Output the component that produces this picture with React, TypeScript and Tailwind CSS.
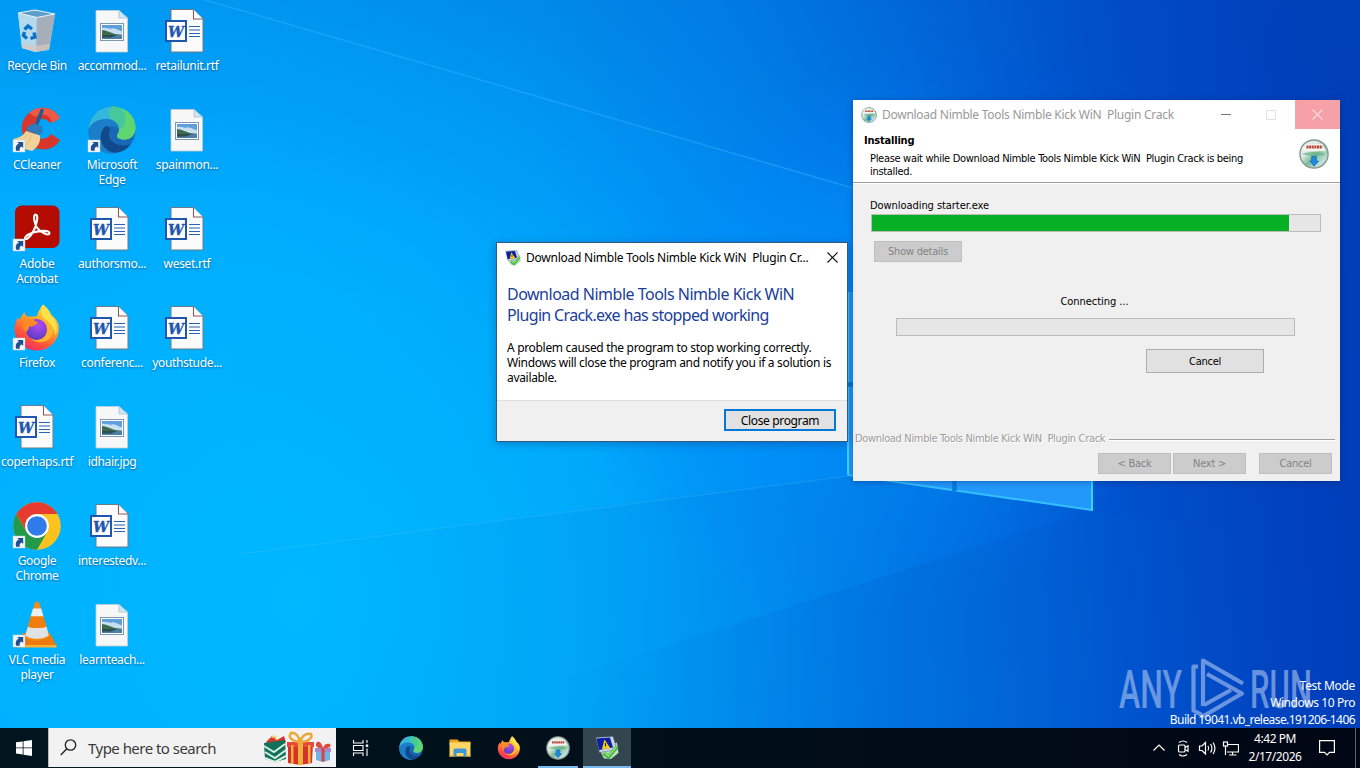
import type { ReactNode } from "react";

const UI = "font-['Noto_Sans','Open_Sans',sans-serif]";
const TAHOMA = "font-['DejaVu_Sans_Condensed','DejaVu_Sans',sans-serif]";

/* ---------- wallpaper ---------- */

function Wallpaper() {
    return (
        <svg className="absolute inset-0" width="1360" height="768" viewBox="0 0 1360 768">
            <defs>
                <linearGradient id="base" gradientUnits="userSpaceOnUse" x1="0" y1="400" x2="1360" y2="290">
                    <stop offset="0" stopColor="#00aeff" />
                    <stop offset="0.2" stopColor="#00aafd" />
                    <stop offset="0.4" stopColor="#009cf5" />
                    <stop offset="0.55" stopColor="#0088ee" />
                    <stop offset="0.68" stopColor="#0070e2" />
                    <stop offset="0.82" stopColor="#0050cc" />
                    <stop offset="0.95" stopColor="#0040bc" />
                    <stop offset="1" stopColor="#003eb8" />
                </linearGradient>
                <linearGradient id="topShade" x1="0" y1="0" x2="0" y2="1">
                    <stop offset="0" stopColor="#0048b8" stopOpacity="0.2" />
                    <stop offset="0.3" stopColor="#0048b8" stopOpacity="0" />
                </linearGradient>
                <radialGradient id="glow" gradientUnits="userSpaceOnUse" cx="870" cy="350" r="280">
                    <stop offset="0" stopColor="#0090ff" stopOpacity="0.85" />
                    <stop offset="0.5" stopColor="#0090ff" stopOpacity="0.4" />
                    <stop offset="1" stopColor="#0080ff" stopOpacity="0" />
                </radialGradient>
                <radialGradient id="floor" gradientUnits="userSpaceOnUse" cx="300" cy="600" r="620">
                    <stop offset="0" stopColor="#00baff" stopOpacity="0.9" />
                    <stop offset="0.5" stopColor="#00b4ff" stopOpacity="0.6" />
                    <stop offset="1" stopColor="#00a0ff" stopOpacity="0" />
                </radialGradient>
                <linearGradient id="under" gradientUnits="userSpaceOnUse" x1="300" y1="0" x2="1250" y2="0">
                    <stop offset="0" stopColor="#0084dc" stopOpacity="0" />
                    <stop offset="0.65" stopColor="#0074dc" stopOpacity="0.3" />
                    <stop offset="0.84" stopColor="#0060d4" stopOpacity="0.22" />
                    <stop offset="1" stopColor="#0050c8" stopOpacity="0" />
                </linearGradient>
                <linearGradient id="deep" gradientUnits="userSpaceOnUse" x1="560" y1="0" x2="1250" y2="0">
                    <stop offset="0" stopColor="#005cc8" stopOpacity="0" />
                    <stop offset="0.5" stopColor="#005cc8" stopOpacity="0.22" />
                    <stop offset="0.77" stopColor="#0054c8" stopOpacity="0.15" />
                    <stop offset="1" stopColor="#0050c8" stopOpacity="0" />
                </linearGradient>
            </defs>
            <rect width="1360" height="768" fill="url(#base)" />
            <rect width="1360" height="768" fill="url(#topShade)" />
            <rect width="1360" height="768" fill="url(#floor)" />
            <rect width="1360" height="768" fill="url(#glow)" />
            <path d="M205 0 853 188V300L0 60V0Z" fill="#00a0ff" opacity="0.12" />
            <path d="M205 0 853 188" stroke="#4cbcff" strokeWidth="1.500" opacity="0.35" />
            <path d="M848 475 240 553V728H1360V550L1092 510Z" fill="url(#under)" />
            <path d="M1092 510 560 680V728H1360V550Z" fill="url(#deep)" />
            <path d="M848 476 240 554" stroke="#50c4ff" strokeWidth="1.500" opacity="0.22" />
            <path d="M848 292H1092V510L848 475Z" fill="#2398fb" />
            <path d="M848 475 1092 510" stroke="#35bfff" strokeWidth="2" />
            <path d="M848 292V475M1092 292V511" stroke="#35d3ff" strokeWidth="2" />
            <path d="M954.500 292V491M847 384.500H1092" stroke="#0a78dc" strokeWidth="4.500" />
        </svg>
    );
}

function Watermark() {
    return (
        <svg
            className="absolute left-[1116px] top-[652px]"
            width="200"
            height="70"
            viewBox="1116 652 200 70"
            opacity="0.5"
        >
            <g fill="#d2defa" fontFamily="Roboto, sans-serif" fontSize="53.500" fontWeight="500">
                <text x="1119" y="708" textLength="63" lengthAdjust="spacingAndGlyphs">ANY</text>
                <text x="1250" y="708" textLength="62" lengthAdjust="spacingAndGlyphs">RUN</text>
            </g>
            <g fill="none" stroke="#d2defa" strokeWidth="4.200" strokeLinejoin="round">
                <path d="M1198 666.500h-4.500V710.500L1202 715" />
                <path d="M1203 706V660.500L1243 683.500" />
                <path d="M1207 674 1242 693.500 1201 717.500" />
                <path d="M1204 705 1231 690" />
            </g>
        </svg>
    );
}

/* ---------- icons ---------- */

function ShortcutArrow() {
    return (
        <g>
            <rect x="0" y="34" width="12" height="12" fill="#f4f8fc" stroke="#b8ccd8" strokeWidth="0.500" />
            <path d="M3.200 44.800C2 41 3.500 38.300 6 37.800L4.200 36H10.200V42L8.600 40.400C6.800 41 6.300 42.800 6.800 44.800Z" fill="#1d4f91" />
        </g>
    );
}

function Svg48({ children }: { children: ReactNode }) {
    return (
        <svg width="48" height="48" viewBox="0 0 48 48" className="overflow-visible">
            {children}
        </svg>
    );
}

function RecycleBin() {
    return (
        <Svg48>
            <path d="M5 6 22 3 42 7 36 43 22 45 9 41Z" fill="#c4d3df" />
            <path d="M5 6 24 10 23 45 9 41Z" fill="#b4d8ec" />
            <path d="M24 10 42 7 36 42 23 45Z" fill="#a4afb9" />
            <path d="M5 6 22 3 42 7 24 10.500Z" fill="#5c9fcb" stroke="#e4f1f8" strokeWidth="1.200" />
            <path d="M8.500 37 23 39 37 36.500 36 42 23 45 9 41Z" fill="#d8c9bd" opacity="0.7" />
            <g fill="none" stroke="#0874c9" strokeWidth="3.400">
                <path d="M11.500 22.500 15 19 19 22" />
                <path d="M21 25.500 22 30 17.500 31.500" />
                <path d="M14 31.500 10.500 28.500 11.500 25" />
            </g>
        </Svg48>
    );
}

function PictureFile() {
    return (
        <Svg48>
            <path d="M8 3.500H31L39.500 11V45H8Z" fill="#f7f7f7" stroke="#c4cdd2" strokeWidth="0.800" />
            <path d="M31 3.500V11H39.500Z" fill="#cfe5f3" stroke="#a6c3d4" strokeWidth="0.800" />
            <rect x="12.500" y="16.500" width="23" height="17" fill="#fff" stroke="#7c98b0" />
            <rect x="14" y="18" width="20" height="14" fill="#5f9fdc" />
            <path d="M14 21c5-1 7 1.500 10 .5s6 2 10 3V28H14z" fill="#c8dff0" />
            <path d="M14 23c4 0 8 2.500 13 4l7 .7v.8H14z" fill="#3e6a50" />
            <path d="M14 28h20v4H14z" fill="#4b7fa8" />
            <path d="M14 28h15l-6 2.500h-9z" fill="#2b4c50" />
        </Svg48>
    );
}

function WordFile() {
    return (
        <Svg48>
            <path d="M8 2.500H30.500L40 12V45H8Z" fill="#fbfbfb" stroke="#6a7b88" />
            <path d="M30.500 2.500V12H40" fill="#fff" stroke="#8a5a5a" strokeWidth="1.100" />
            <path d="M26 19.500H37M26 23H37M26 26.500H37M26 29.500H37" stroke="#2b62b4" strokeWidth="1.200" />
            <rect x="3" y="14" width="20" height="20" fill="#fff" stroke="#1f56ae" strokeWidth="2" />
            <text
                x="13"
                y="29.500"
                textAnchor="middle"
                textLength="16"
                lengthAdjust="spacingAndGlyphs"
                fontFamily="DejaVu Serif, serif"
                fontSize="15"
                fontWeight="700"
                fontStyle="italic"
                fill="#1f56ae"
                stroke="#1f56ae"
                strokeWidth="0.400"
            >
                W
            </text>
        </Svg48>
    );
}

function CCleaner() {
    return (
        <Svg48>
            <path
                d="M47 12C41 1 26-2 16 7c-6 5-8 12-7 18 2 14 14 20 25 18 6-1 10-4 13-9l-9-6c-4 6-12 6-15 1-4-5-3-12 2-15 5-2 9-1 12 3z"
                fill="#d8352b"
            />
            <path d="M47 12C41 1 26-2 16 7l6 4c8-5 15-2 17 6z" fill="#ee5a45" />
            <path d="M29 4.500 23 20" stroke="#225c92" strokeWidth="3.500" strokeLinecap="round" />
            <path d="M14 22C17 17 24 17 29 20L30 26 27 29 14 25Z" fill="#2f7cbc" />
            <path d="M13 25 27 29.500C28 36 25 41 19 45 11 43 3 39 0 33 6 32 10 30 13 25Z" fill="#f3d29a" />
            <path d="M14 28c-2 5-5 8-9 9M18 29c-1 6-4 10-8 12" fill="none" stroke="#e0b878" strokeWidth="0.900" />
            <ShortcutArrow />
        </Svg48>
    );
}

function EdgeMark() {
    return (
        <g>
            <circle cx="24" cy="24" r="23.500" fill="#1968b8" />
            <path d="M.6 24C1 10 12 .5 24 .5 38 .5 47.500 10 47.500 22c0 7-5 11.500-11 11.500-4 0-7.500-1.500-7.500-3.500 0-1.500 2-2.500 2-6 0-5-5-9-11.500-9C9 15 2 21 .6 24Z" fill="#34b7dc" />
            <path d="M24 .5C38 .5 47.500 10 47.500 22c0 7-5 11.500-11 11.500-4 0-7.500-1.500-7.500-3.500 0-1.500 2-2.500 2-6 0-4-3-7-7-8.500C20 10 20 4 24 .5Z" fill="#46c99a" />
            <path d="M34 2.800C42 6 47.500 13 47.500 22c0 7-5 11.500-11 11.500-4 0-7.500-1.500-7.500-3.500 0-1.500 2-2.500 2-6 8-3 9-13 3-21.200Z" fill="#5fd672" />
            <path d="M.5 25C1 18 9 12.500 19 13c8 .500 12 5 12 10.500-2-2.500-5-3.500-8-3.500-8 2-12 12-7 20 3 4.500 7 6.500 11 7.500C12 48.500 0 38 .5 25Z" fill="#1a7fc8" />
            <path d="M17 20.500C11 26 11 37 18 43c8 6.500 20 3 25-5.500-5 3-13 3-18-1.500-5-4.500-5-9-2.500-13.500C20.500 20.500 19 20 17 20.500Z" fill="#114a8b" />
        </g>
    );
}

function FirefoxMark() {
    return (
        <g>
            <defs>
                <linearGradient id="fox" x1="0.8" y1="0" x2="0.25" y2="1">
                    <stop offset="0" stopColor="#ffe43f" />
                    <stop offset="0.4" stopColor="#ffa52a" />
                    <stop offset="0.75" stopColor="#ff503c" />
                    <stop offset="1" stopColor="#e9286c" />
                </linearGradient>
                <radialGradient id="globe" cx="0.6" cy="0.3" r="0.8">
                    <stop offset="0" stopColor="#b14af0" />
                    <stop offset="1" stopColor="#4f3ac0" />
                </radialGradient>
            </defs>
            <path
                d="M30 .5c4 3 7 7 8.500 11 3 1.500 5.500 5 7 9 2.500 13-7 26-21.500 26C11 46.500 1.500 36.500 1.500 25c0-5 1.500-9 4-12L6 16.500C8 13 9.500 11 11.500 8c.5 3 2 4.500 4 4.500h8C25 8.500 27 4 30 .5Z"
                fill="url(#fox)"
            />
            <circle cx="23.500" cy="25.500" r="10.500" fill="url(#globe)" />
            <path d="M10 16c6-2 11-1 15 3-3 3-6 3.500-9 3.500 0 4-3 6-4.500 4.500C9.500 24 9 19 10 16Z" fill="#ff8a22" />
            <path d="M20 13.500c7-2 14 2 14.500 11C34.500 35 24 39 17 34c9 9 24 3 23-9-1-8-9-14-20-11.500Z" fill="#ffb52e" />
            <path d="M30 .5c4 3 7 7 8.500 11 5 5 7 13 4 20-1-8-5-12-10-16-5-3.500-6-9-2.500-15Z" fill="#ffe04a" />
        </g>
    );
}

function Acrobat() {
    return (
        <Svg48>
            <rect x="2" y="0.500" width="44.500" height="42.500" rx="7" fill="#b30b00" />
            <path
                d="M22.500 9.500c2.800 0 2 6-.2 12.500C20 28 15.500 34 13 34c-2.500 0-.5-4 7-6.500 7-2.200 16.500-2.300 16.500.7 0 3-8 .5-12.500-5.500-3-4.500-4-13.200-1.500-13.200Z"
                fill="none"
                stroke="#fff"
                strokeWidth="2.100"
            />
            <ShortcutArrow />
        </Svg48>
    );
}

function Chrome() {
    return (
        <Svg48>
            <circle cx="24" cy="24" r="23.800" fill="#fcc31e" />
            <path d="M3.400 12.100A23.800 23.800 0 0 0 24 47.800L34.300 30 24 24 13.700 30Z" fill="#239a4a" />
            <path d="M3.400 12.100A23.800 23.800 0 0 1 44.600 12.100H24L14 18V30Z" fill="#e63b2e" />
            <circle cx="24" cy="24" r="11.900" fill="#fff" />
            <circle cx="24" cy="24" r="9.800" fill="#2f7bea" />
            <ShortcutArrow />
        </Svg48>
    );
}

function Vlc() {
    return (
        <Svg48>
            <path d="M10 32H37L43.500 45H4Z" fill="#ee7a0b" />
            <path d="M4 44H43.500V46.500H4Z" fill="#ffae30" />
            <path d="M22 1.500c2-1.500 3.500-1 4.500 1L36 35c-3 6-22 6-24 0Z" fill="#f58a14" />
            <path d="M20 7.500h8.200l2.300 8H17.700c.6-2.500 1.500-5 2.300-8Z" fill="#eceff1" />
            <path d="M15 25.500c5 2 13 2 18.500 0L35.800 34c-4 5-20 5-23.500 0Z" fill="#dfe3e6" />
            <path d="M17.700 15.500h12.800l3 10c-5 2-13.500 2-18.500 0Z" fill="#f07e0c" />
            <ShortcutArrow />
        </Svg48>
    );
}

function InstallerDisc({ size }: { size: number }) {
    return (
        <svg width={size} height={size} viewBox="0 0 32 32">
            <defs>
                <linearGradient id="disc" x1="0" y1="0" x2="1" y2="1">
                    <stop offset="0" stopColor="#e9f5f2" />
                    <stop offset="0.35" stopColor="#d9e9e2" />
                    <stop offset="0.55" stopColor="#7dbd98" />
                    <stop offset="0.8" stopColor="#c3e2da" />
                    <stop offset="1" stopColor="#8daca8" />
                </linearGradient>
            </defs>
            <circle cx="16" cy="16" r="15" fill="url(#disc)" stroke="#87958f" strokeWidth="1.500" />
            <path d="M7 5h18l4 8H3Z" fill="#f2f3ec" />
            <path d="M8 8.500H25" stroke="#b8453c" strokeWidth="3" strokeDasharray="2.200 0.600" />
            <path d="M3 16c7-3 18-3 26 1-5 0-8 1-13 1S7 17 3 16Z" fill="#5ea984" opacity="0.6" />
            <path d="M13.500 18.500h5v5H21L16 29 11.500 23.500h2Z" fill="#1d8ade" stroke="#0e5ca8" strokeWidth="0.600" />
        </svg>
    );
}

function ErrorReport({ size }: { size: number }) {
    return (
        <svg width={size} height={size} viewBox="0 0 24 24">
            <path d="M9 11 22 6.500 23.500 17 16 23 9 22.500 6 17Z" fill="#bcdcbc" />
            <path d="M1 1.500 18 .5 22 13.500 4.500 16.500Z" fill="#ccd6e4" stroke="#5c6880" strokeWidth="0.500" />
            <path d="M1.500 2.500 15 1.500 18 11.500 4 14Z" fill="#0b1fa3" />
            <path d="M9.500 3.500 15.500 12.500 7 13Z" fill="#ffd417" />
            <path d="M10.500 7v3.500" stroke="#222" strokeWidth="1.200" />
            <path d="M8.500 17 13.500 21 22 10.500" fill="none" stroke="#43b53c" strokeWidth="3.600" />
            <path d="M9 16.500 13.500 20.200 21.500 10.500" fill="none" stroke="#9de88c" strokeWidth="1.200" />
        </svg>
    );
}

function Explorer() {
    return (
        <svg width="24" height="24" viewBox="0 0 24 24">
            <path d="M1.500 3.500h8l2 2h11v3h-21Z" fill="#e8a61c" />
            <path d="M1.500 6.500h21v14h-21Z" fill="#ffd766" />
            <path d="M5.500 20.500V14q0-1.500 1.500-1.500h10q1.500 0 1.500 1.500V20.500H15.500V17h-7v3.500Z" fill="#3c96d8" />
            <path d="M1.500 19h4v1.500h-4ZM18.500 19h4v1.500h-4Z" fill="#f0bb3a" />
        </svg>
    );
}

function Gifts() {
    return (
        <svg width="70" height="36" viewBox="0 0 70 36">
            <path d="M3 11 9 5l5 4 7-4 2 6-6 3H6Z" fill="#d8342c" />
            <path d="M1 12 22 9 23 28 12 31 2 28Z" fill="#12715a" />
            <path d="M1 15 11 21 22 13M2 21 12 27 23 19M2 27 12 31 23 25" fill="none" stroke="#d8efe4" strokeWidth="2" />
            <path d="M9 7c1-3 5-3 4 2" fill="none" stroke="#f3d36a" strokeWidth="1.500" />
            <path d="M25 12H50L49 32 37 34 25 32Z" fill="#d5332a" />
            <path d="M24 11H51V16H24Z" fill="#e8493b" />
            <path d="M35 11h5v23h-5ZM28 14h2.500v19H28ZM45 14h2.500v18H45Z" fill="#f2b13c" />
            <path d="M37 11C28 10 25 6 28 2c5-1 8 4 9 9 2-6 6-9 11-8 2 4-3 8-11 8Z" fill="none" stroke="#eca93a" strokeWidth="2.600" />
            <path d="M53 19H67V29L60 31 53 29Z" fill="#6fb2e6" />
            <path d="M52 17h16v4H52Z" fill="#a48bc9" />
            <path d="M58.500 17h3v13.500h-3Z" fill="#d8433a" />
            <path d="M60 17C55 18 51 15 54 11c3-1 5 2 6 6 1-4 4-5 7-4 2 3-2 5-7 4Z" fill="#dd4a40" />
        </svg>
    );
}

/* ---------- desktop ---------- */

type Shortcut = { icon: ReactNode; label: string[] };

const columns: Shortcut[][] = [
    [
        { icon: <RecycleBin />, label: ["Recycle Bin"] },
        { icon: <CCleaner />, label: ["CCleaner"] },
        { icon: <Acrobat />, label: ["Adobe", "Acrobat"] },
        {
            icon: (
                <Svg48>
                    <FirefoxMark />
                    <ShortcutArrow />
                </Svg48>
            ),
            label: ["Firefox"],
        },
        { icon: <WordFile />, label: ["coperhaps.rtf"] },
        { icon: <Chrome />, label: ["Google", "Chrome"] },
        { icon: <Vlc />, label: ["VLC media", "player"] },
    ],
    [
        { icon: <PictureFile />, label: ["accommod..."] },
        {
            icon: (
                <Svg48>
                    <EdgeMark />
                    <ShortcutArrow />
                </Svg48>
            ),
            label: ["Microsoft", "Edge"],
        },
        { icon: <WordFile />, label: ["authorsmo..."] },
        { icon: <WordFile />, label: ["conferenc..."] },
        { icon: <PictureFile />, label: ["idhair.jpg"] },
        { icon: <WordFile />, label: ["interestedv..."] },
        { icon: <PictureFile />, label: ["learnteach..."] },
    ],
    [
        { icon: <WordFile />, label: ["retailunit.rtf"] },
        { icon: <PictureFile />, label: ["spainmon..."] },
        { icon: <WordFile />, label: ["weset.rtf"] },
        { icon: <WordFile />, label: ["youthstude..."] },
    ],
];

function DesktopIcons() {
    return (
        <div className="relative -ml-[0.5px] flex h-full">
            {columns.map((column, i) => (
                <div key={i} className="flex w-[75px] flex-col">
                    {column.map((item) => (
                        <div key={item.label[0]} className="flex h-[99px] flex-col items-center pt-[7px]">
                            {item.icon}
                            <div className="mt-[3px] text-center text-[12px] leading-[15px] tracking-[-0.32px] whitespace-nowrap text-white [text-shadow:0_1px_2px_rgba(0,40,90,0.6)]">
                                {item.label.map((line) => (
                                    <div key={line}>{line}</div>
                                ))}
                            </div>
                        </div>
                    ))}
                </div>
            ))}
        </div>
    );
}

/* ---------- windows ---------- */

function CrashDialog() {
    return (
        <div className="absolute left-[496px] top-[242px] flex h-[200px] w-[352px] flex-col border border-[#33597c] bg-white text-black shadow-[0_2px_8px_rgba(0,30,90,0.3)]">
            <div className="flex h-[29px] items-center pl-2">
                <ErrorReport size={16} />
                <span className="ml-[5px] flex-1 text-[12px] tracking-[-0.24px] whitespace-pre">
                    Download Nimble Tools Nimble Kick WiN  Plugin Cr...
                </span>
                <svg width="11" height="11" viewBox="0 0 11 11" className="mr-[9px]">
                    <path d="M.5.5 10.500 10.500M10.500.5.5 10.500" stroke="#111" strokeWidth="1.100" />
                </svg>
            </div>
            <div className="flex-1 px-[10px] pt-[12px]">
                <h1 className="text-[16px] leading-[21px] whitespace-nowrap text-[#1a4099]">
                    <div className="tracking-[-0.5px]">Download Nimble Tools Nimble Kick WiN</div>
                    <div className="tracking-[-0.66px]">Plugin Crack.exe has stopped working</div>
                </h1>
                <p className="mt-[14px] text-[12px] leading-[15px] tracking-[-0.32px] whitespace-nowrap">
                    A problem caused the program to stop working correctly.
                    <br />
                    Windows will close the program and notify you if a solution is
                    <br />
                    available.
                </p>
            </div>
            <div className="flex h-[41px] items-start justify-end border-t border-[#dfdfdf] bg-[#f0f0f0] pt-2 pr-[11px]">
                <button className="h-[22px] w-[112px] border-2 border-[#0078d7] bg-[#e1e1e1] pt-px text-[12px] leading-[17px] tracking-[-0.35px]">
                    Close program
                </button>
            </div>
        </div>
    );
}

function DisabledButton({ className, children }: { className: string; children: ReactNode }) {
    return (
        <button
            disabled
            className={`h-[21px] border border-[#bfbfbf] bg-[#cccccc] pt-px text-[11px] leading-[18px] tracking-[-0.25px] text-[#838383] ${className}`}
        >
            {children}
        </button>
    );
}

function InstallerWindow() {
    return (
        <div
            className={`absolute left-[853px] top-[100px] flex h-[381px] w-[487px] flex-col bg-[#f0f0f0] text-[11px] text-black shadow-[0_1px_6px_rgba(0,20,70,0.35)] ${TAHOMA}`}
        >
            <div className="flex h-[29px] shrink-0 items-center bg-white pl-2">
                <InstallerDisc size={16} />
                <span className={`ml-[5px] flex-1 text-[12px] tracking-[-0.27px] whitespace-pre text-[#999999] ${UI}`}>
                    Download Nimble Tools Nimble Kick WiN  Plugin Crack
                </span>
                <div className="mr-[35px] h-px w-[10px] bg-[#777]" />
                <div className="mr-[19px] size-[10px] border border-[#e4e4e4]" />
                <div className="flex h-full w-[45px] items-center justify-center bg-[#f6a1a8]">
                    <svg width="11" height="11" viewBox="0 0 11 11">
                        <path d="M.5.5 10.500 10.500M10.500.5.5 10.500" stroke="#fbdcde" strokeWidth="1.100" />
                    </svg>
                </div>
            </div>

            <div className="flex h-[54px] shrink-0 justify-between border-b border-[#a0a0a0] bg-white">
                <div className="pt-[5px] pl-[11px]">
                    <div className="leading-[13px] font-bold tracking-[-0.2px]">Installing</div>
                    <div className="mt-[5px] pl-[6px] leading-[13px] tracking-[-0.31px] whitespace-pre">
                        Please wait while Download Nimble Tools Nimble Kick WiN  Plugin Crack is being
                        <br />
                        installed.
                    </div>
                </div>
                <div className="pt-[10px] pr-[11px]">
                    <InstallerDisc size={30} />
                </div>
            </div>

            <div className="flex flex-1 flex-col border-t border-white pt-[15px]">
                <div className="pl-[17px] leading-[14px] tracking-[-0.06px]">Downloading starter.exe</div>
                <div className="mt-px ml-[18px] h-[18px] w-[450px] border border-[#bcbcbc] bg-[#e6e6e6]">
                    <div className="h-full w-[417px] bg-[#06b025]" />
                </div>
                <DisabledButton className="mt-[9px] ml-[21px] w-[88px]">Show details</DisabledButton>
                <div className="mt-[33px] pr-[4px] text-center leading-[14px] tracking-[-0.05px]">Connecting ...</div>
                <div className="mt-[9px] ml-[43px] h-[18px] w-[399px] border border-[#bcbcbc] bg-[#e6e6e6]" />
                <button className="mt-[13px] ml-[293px] h-[24px] w-[118px] border border-[#adadad] bg-[#e1e1e1] leading-[21px] tracking-[-0.25px]">
                    Cancel
                </button>
            </div>

            <div className="flex h-[14px] shrink-0 items-center pr-[5px] pl-[2px] text-[#9c9c9c]">
                <span className="pt-[2px] tracking-[-0.33px] whitespace-pre [text-shadow:1px_1px_0_#fff]">
                    Download Nimble Tools Nimble Kick WiN  Plugin Crack
                </span>
                <div className="mt-[3px] ml-[4px] h-[2px] flex-1 border-t border-[#a0a0a0] bg-white" />
            </div>
            <div className="flex h-[36px] shrink-0 justify-end pt-[8px] pr-[8px]">
                <DisabledButton className="w-[73px]">&lt; Back</DisabledButton>
                <DisabledButton className="ml-[2px] w-[73px]">Next &gt;</DisabledButton>
                <DisabledButton className="ml-[13px] w-[73px]">Cancel</DisabledButton>
            </div>
        </div>
    );
}

/* ---------- taskbar ---------- */

function TaskButton({ children, state }: { children: ReactNode; state?: "open" | "active" }) {
    return (
        <div className={`relative flex w-[48px] items-center justify-center ${state === "active" ? "bg-[#33454f]" : ""}`}>
            {children}
            {state === "open" && <div className="absolute bottom-0 left-1 h-[2px] w-[40px] bg-[#76b9ed]" />}
            {state === "active" && <div className="absolute bottom-0 left-0 h-[2px] w-[48px] bg-[#76b9ed]" />}
        </div>
    );
}

function Taskbar() {
    return (
        <div className="relative flex h-[40px] shrink-0 bg-linear-to-r from-[#01161f] to-[#010714]">
            <div className="flex w-[48px] items-center justify-center">
                <svg width="16" height="16" viewBox="0 0 16 16" fill="#fff">
                    <path d="M0 2.300 6.700 1.400V7.500H0ZM7.500 1.300 16 0V7.500H7.500ZM0 8.300H6.700V14.500L0 13.600ZM7.500 8.300H16V16L7.500 14.700Z" />
                </svg>
            </div>
            <div className="flex h-[39px] w-[288px] items-center border-l border-[#b8b8b8] bg-[#f2f2f2] pl-[11px]">
                <svg width="17" height="17" viewBox="0 0 17 17" fill="none" stroke="#1c1c1c" strokeWidth="1.300">
                    <circle cx="10.500" cy="6" r="5.200" />
                    <path d="M6.800 9.800.8 16" />
                </svg>
                <span className="ml-[11px] flex-1 pt-px text-[15px] tracking-[-0.53px] text-[#3b3b3b]">Type here to search</span>
                <div className="mt-[2px] mr-[3px]">
                    <Gifts />
                </div>
            </div>

            <div className="flex gap-px">
                <TaskButton>
                    <svg width="17" height="16" viewBox="0 0 17 16" fill="none" stroke="#fff" strokeWidth="1.100">
                        <path d="M1.500 0V3H11V0M1.500 16V13H11V16M1.500 5.500H11V10.500H1.500ZM15 0V3M15 8.500V16" />
                        <rect x="13.800" y="4.500" width="2.400" height="2.400" fill="#fff" stroke="none" />
                    </svg>
                </TaskButton>
                <div className="w-px" />
                <TaskButton>
                    <svg width="24" height="24" viewBox="0 0 48 48"><EdgeMark /></svg>
                </TaskButton>
                <TaskButton>
                    <Explorer />
                </TaskButton>
                <TaskButton>
                    <svg width="24" height="24" viewBox="0 0 48 48"><FirefoxMark /></svg>
                </TaskButton>
                <TaskButton state="open">
                    <InstallerDisc size={24} />
                </TaskButton>
                <TaskButton state="active">
                    <ErrorReport size={24} />
                </TaskButton>
            </div>

            <div className="ml-auto flex items-center text-white">
                <svg width="86" height="18" viewBox="0 0 86 18" fill="none" stroke="#fff" strokeWidth="1.200">
                    {/* overflow chevron */}
                    <path d="M.5 11.500 6 6 11.500 11.500" />
                    {/* meet now */}
                    <rect x="25.500" y="6" width="6.500" height="7" rx="1" />
                    <path d="M32 8.500 35 6.800V12.200L32 10.500M26 3.500Q30 .5 34 3.500M26 15.500Q30 18.500 34 15.500" />
                    {/* volume */}
                    <path d="M46.500 7H49L52.500 3.500V15L49 11.500H46.500ZM55 7Q56.500 9.300 55 11.500M57.500 5Q60.500 9.300 57.500 13.500M60 3.500Q64 9.300 60 15" />
                    {/* network */}
                    <path d="M75 5.500H85.500V13H74M79.500 13V16M76 16H83.500" />
                    <rect x="70.500" y="3" width="4" height="4" />
                    <path d="M72.500 7V16" />
                </svg>
                <div className="ml-[3px] w-[66px] text-center text-[12px] leading-[18px] tracking-[-0.45px]">
                    <div>4:42 PM</div>
                    <div>2/17/2026</div>
                </div>
                <svg width="16" height="16" viewBox="0 0 16 16" className="mr-[20px] ml-[11px]" fill="none" stroke="#fff" strokeWidth="1.200">
                    <path d="M.6.6H15.400V12.400H10.500L8 15 5.500 12.400H.6Z" />
                </svg>
                <div className="mr-1 h-[40px] w-px bg-[#5a6472]" />
            </div>
        </div>
    );
}

export default function App() {
    return (
        <div className={`relative flex h-[768px] w-[1360px] flex-col overflow-hidden bg-[#0078d7] ${UI}`}>
            <Wallpaper />
            <main className="flex-1">
                <DesktopIcons />
            </main>
            <Watermark />
            <div className="absolute top-[677px] right-[5px] text-right text-[12px] leading-[17px] text-white">
                <div className="tracking-[-0.3px]">Test Mode</div>
                <div className="tracking-[-0.4px]">Windows 10 Pro</div>
                <div className="tracking-[-0.57px]">Build 19041.vb_release.191206-1406</div>
            </div>
            <InstallerWindow />
            <CrashDialog />
            <Taskbar />
        </div>
    );
}
